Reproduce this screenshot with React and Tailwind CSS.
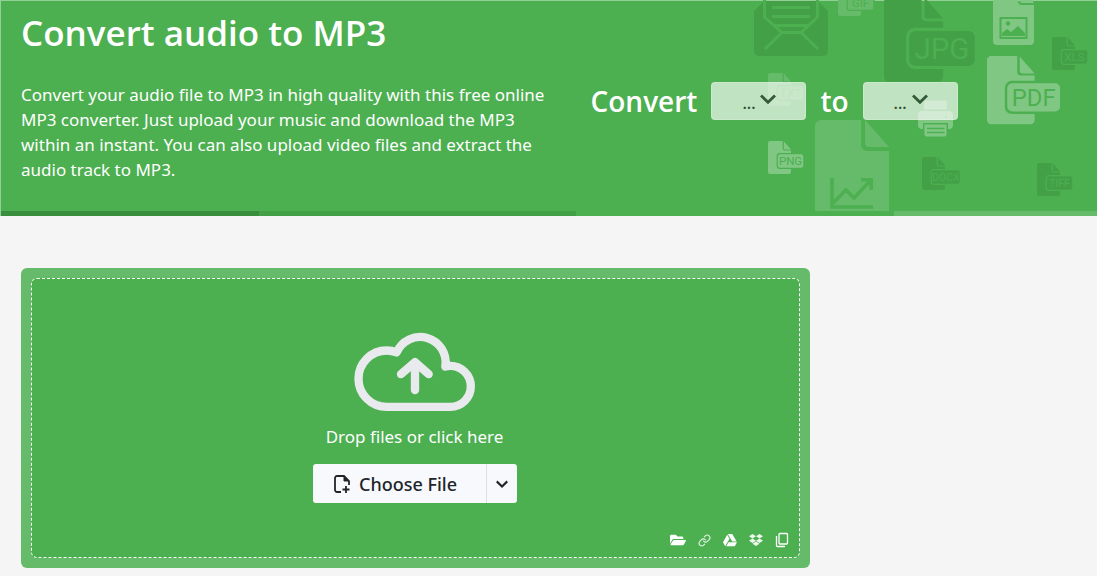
import { FaDropbox, FaFolderOpen, FaGoogleDrive } from "react-icons/fa";
import { FiLink } from "react-icons/fi";

const FILES = [
  { label: "GIF", x: 838, y: -17, color: "#66bb6a" },
  { label: "TXT", x: 768, y: 73, color: "#66bb6a" },
  { label: "JPG", x: 884, y: -3, scale: 2.57, color: "#43a047" },
  { label: "PDF", x: 987, y: 56, scale: 2.07, color: "#81c784" },
  { label: "XLS", x: 1052, y: 37, color: "#43a047" },
  { label: "PNG", x: 768, y: 141, color: "#81c784" },
  { label: "DOCX", x: 922, y: 157, tag: 28, color: "#43a047" },
  { label: "TIFF", x: 1037, y: 163, color: "#43a047" },
];

function FileShape({ label, x, y, color, scale = 1, tag = 25.5 }) {
  return (
    <g transform={`translate(${x} ${y}) scale(${scale})`} fill={color}>
      <path d="M2 0H14.6V7.6q0 1.8 1.8 1.8H23V31a2 2 0 0 1-2 2H2a2 2 0 0 1-2-2V2a2 2 0 0 1 2-2Z" />
      <path d="M15.8.2 23 8.4H17q-1.2 0-1.2-1.2Z" />
      <rect x="8.6" y="12" width={tag + 2.6} height="16" rx="3.4" fill="#4caf50" />
      <rect x="9.8" y="13.2" width={tag} height="13.6" rx="2.4" />
      <text
        x={9.8 + tag / 2}
        y="24.1"
        textAnchor="middle"
        fill="#4caf50"
        fontSize={label.length > 3 ? 10.5 : 11.5}
        className="font-['Roboto',sans-serif]"
      >
        {label}
      </text>
    </g>
  );
}

/** Background drawing: files, envelope and printer. */
function Backdrop() {
  return (
    <svg
      viewBox="747 0 350 211"
      width="350"
      height="211"
      aria-hidden="true"
      className="pointer-events-none absolute right-0 -top-px"
    >
      {/* Envelope */}
      <path d="M764 1H818L828 11V51a5 5 0 0 1-5 5H759a5 5 0 0 1-5-5V11Z" fill="#43a047" />
      <g fill="none" stroke="#4caf50" strokeWidth="3">
        <path d="M764.5 0V17L782 32.5H801L817.5 17V0M765 49l17-16.5M818 49l-17-16.5" />
        <path d="M772 7.5h38M772 16.5h38M774 25.5h34" />
      </g>

      {FILES.map((file) => (
        <FileShape key={file.label} {...file} />
      ))}

      {/* Picture file */}
      <path d="M993 0H1018V1q0 4 4 4h12V41a4 4 0 0 1-4 4H997a4 4 0 0 1-4-4Z" fill="#81c784" />
      <path d="M1020 0h12l2 3h-12q-2 0-2-2Z" fill="#81c784" />
      <rect x="1000.5" y="18" width="26" height="20" fill="none" stroke="#4caf50" strokeWidth="2" />
      <circle cx="1008" cy="23.5" r="2.2" fill="#4caf50" />
      <path d="M1002 36v-3l5-4 4 3 7-6 7 7v3Z" fill="#4caf50" />

      {/* Chart file */}
      <path d="M821 120H861V144q0 7 7 7h21v60h-74v-85a6 6 0 0 1 6-6Z" fill="#66bb6a" />
      <path d="M865 120l24 27h-20q-4 0-4-4Z" fill="#66bb6a" />
      <g fill="none" stroke="#4caf50" strokeWidth="3.5">
        <path d="M832 178v29h41M832 204l14-14 8 8 16-17" />
        <path d="M861 179.7h10.300V190" />
      </g>

      {/* Printer */}
      <g fill="#81c784">
        <rect x="924" y="100.5" width="23" height="9" rx="1.5" />
        <path d="M922 111h27a4 4 0 0 1 4 4v10a4 4 0 0 1-4 4h-1v-6h-25v6h-1a4 4 0 0 1-4-4v-10a4 4 0 0 1 4-4Z" />
        <path d="M924.5 124.5h22v10a2 2 0 0 1-2 2h-18a2 2 0 0 1-2-2Z" />
        <path d="M927 128.5h17.500M927 132.5h17.500" stroke="#4caf50" strokeWidth="1.3" />
        <circle cx="946" cy="117" r="1" fill="#4caf50" />
      </g>
    </svg>
  );
}

function Chevron({ className }) {
  return (
    <svg viewBox="0 0 16 10" fill="none" stroke="currentColor" strokeWidth="2.8" aria-hidden="true" className={className}>
      <path d="M1 1.500 8 8.300 15 1.500" />
    </svg>
  );
}

function FormatSelect({ label }) {
  return (
    <div className="relative">
      <select
        aria-label={label}
        className="block h-[38px] w-[95px] appearance-none rounded-sm border border-white/20 bg-white/65 pl-[30px] pt-1 text-base text-[#2f4f31]"
      >
        <option>...</option>
      </select>
      <Chevron className="pointer-events-none absolute left-[49px] top-3 h-[10px] w-4 text-[#355a38]" />
    </div>
  );
}

function CloudUpload() {
  return (
    <svg
      viewBox="165 39 360 233"
      fill="none"
      stroke="#e8eaed"
      strokeWidth="25"
      strokeLinecap="round"
      strokeLinejoin="round"
      aria-hidden="true"
      className="h-[78px] w-[120px] overflow-visible"
    >
      <path d="M260 260H451A61.500 61.500 0 0 0 451 137Q443 137 436 139A76.500 76.500 0 0 0 290 97Q276 91 260 91A84 84 0 0 0 260 260Z" />
      <path d="M345 210V127M303 162L345 126L386 162" />
    </svg>
  );
}

function FilePlus() {
  return (
    <svg viewBox="0 0 18 20" fill="none" stroke="currentColor" strokeWidth="1.8" aria-hidden="true" className="h-5 w-[18px]">
      <path d="M8 18H4a2 2 0 0 1-2-2V4a2 2 0 0 1 2-2h7l5 5v4" />
      <path d="M11 2v5h5Z" fill="currentColor" strokeWidth="1" />
      <path d="M13 12v7M9.500 15.500h7" />
    </svg>
  );
}

function CopyIcon() {
  return (
    <svg viewBox="0 0 14 16" fill="none" stroke="currentColor" strokeWidth="1.3" aria-hidden="true" className="h-4 w-[14px]">
      <rect x="4" y="1.5" width="8.5" height="10.5" rx="1" />
      <path d="M1.500 4v9.500a1 1 0 0 0 1 1H10" />
    </svg>
  );
}

const SOURCES = [
  { label: "Browse files", icon: <FaFolderOpen className="size-4" /> },
  { label: "Enter URL", icon: <FiLink className="size-[13px] text-white/85" /> },
  { label: "Google Drive", icon: <FaGoogleDrive className="size-[14px]" /> },
  { label: "Dropbox", icon: <FaDropbox className="size-[14px] text-white/90" /> },
  { label: "Paste from clipboard", icon: <CopyIcon /> },
];

export default function App() {
  return (
    <div className="min-h-screen bg-[#f5f5f5] font-['Noto_Sans',sans-serif]">
      <header className="relative border-l border-t border-[#94cf96] bg-[#4caf50] text-white">
        <Backdrop />
        <div className="relative grid min-h-[210px] grid-cols-[52%_1fr] pl-5">
          <div className="pr-5">
            <h1 className="pt-2 font-['Open_Sans',sans-serif] text-[35px] font-semibold leading-[48px]">
              Convert audio to MP3
            </h1>
            <p className="pt-[25px] text-[17px] leading-[25px]">
              Convert your audio file to MP3 in high quality with this free online MP3 converter. Just upload your music
              and download the MP3 within an instant. You can also upload video files and extract the audio track to MP3.
            </p>
          </div>
          <div className="flex items-center gap-[14px] self-start pl-[10px] pt-20 font-['Open_Sans',sans-serif] text-[28px] font-semibold leading-10">
            <span>Convert</span>
            <FormatSelect label="Convert from" />
            <span>to</span>
            <FormatSelect label="Convert to" />
          </div>
        </div>
        <div className="relative grid h-[5px] grid-cols-[23.5%_29%_29%_1fr]">
          <div className="bg-[#388e3c]" />
          <div className="bg-[#43a047]" />
          <div className="bg-[#4caf50]" />
          <div className="bg-[#66bb6a]" />
        </div>
      </header>

      <main className="pb-2 pl-[21px] pr-6 pt-[52px]">
        <section className="w-3/4 rounded-md bg-[#66bb6a] p-[10px]">
          <div className="flex min-h-[280px] flex-col items-center rounded-md border border-dashed border-white bg-[#4caf50] pb-[9px] pl-[6px] pr-2 pt-[54px] text-white">
            <CloudUpload />
            <p className="pt-3 text-[17px] leading-7">Drop files or click here</p>
            <div className="mt-[13px] flex h-[39px] w-[204px] rounded-[3px] bg-[#f8f9fc] text-[#212529]">
              <button type="button" className="flex flex-1 items-center justify-center gap-2 pr-2 text-lg font-medium">
                <FilePlus />
                Choose File
              </button>
              <button
                type="button"
                aria-label="More sources"
                className="flex w-[31px] items-center justify-center border-l border-[#dddfe2]"
              >
                <Chevron className="h-2 w-3" />
              </button>
            </div>
            <div className="mt-auto flex gap-2 self-end">
              {SOURCES.map((source) => (
                <button
                  key={source.label}
                  type="button"
                  aria-label={source.label}
                  className="flex h-4 w-[18px] items-center justify-center"
                >
                  {source.icon}
                </button>
              ))}
            </div>
          </div>
        </section>
      </main>
    </div>
  );
}
